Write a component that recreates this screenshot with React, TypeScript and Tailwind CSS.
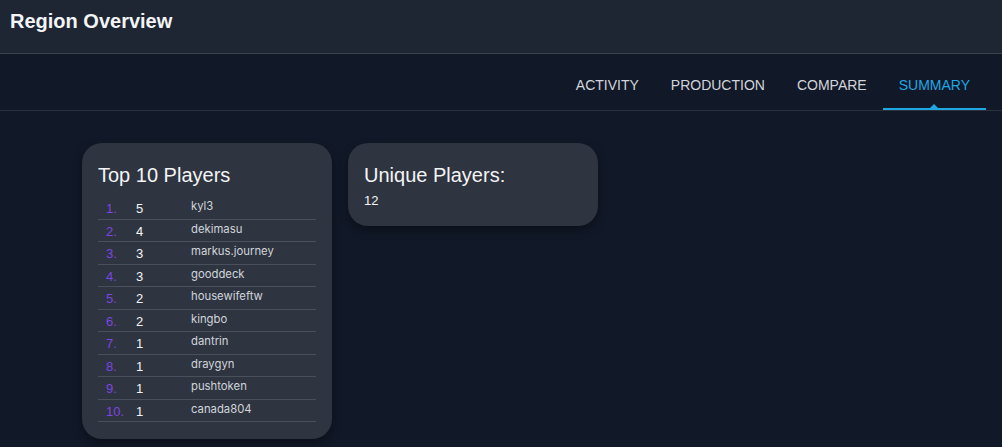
const players = [
  { rank: 1, count: 5, name: "kyl3" },
  { rank: 2, count: 4, name: "dekimasu" },
  { rank: 3, count: 3, name: "markus.journey" },
  { rank: 4, count: 3, name: "gooddeck" },
  { rank: 5, count: 2, name: "housewifeftw" },
  { rank: 6, count: 2, name: "kingbo" },
  { rank: 7, count: 1, name: "dantrin" },
  { rank: 8, count: 1, name: "draygyn" },
  { rank: 9, count: 1, name: "pushtoken" },
  { rank: 10, count: 1, name: "canada804" },
];

const tabs = ["ACTIVITY", "PRODUCTION", "COMPARE", "SUMMARY"];

export default function App() {
  return (
    <main className="min-h-screen bg-[#111827] font-['Liberation_Sans',Arial,sans-serif]">
      {/* ── Header ── */}
      <header className="h-[54px] bg-[#1e2533] border-b border-[#3a404c] px-[10px] pt-[9px]">
        <h1 className="text-[20px] font-bold text-[#f3f4f6] leading-6">Region Overview</h1>
      </header>

      {/* ── Tabs ── */}
      <nav className="h-[57px] border-b border-[#2c323d] flex justify-end pr-[16px]">
        {tabs.map((t) => {
          const active = t === "SUMMARY";
          return (
            <div
              key={t}
              className={`relative flex items-center px-[16px] pt-[6px] text-[14px] ${
                active ? "text-[#1fa7e4]" : "text-[#d1d5db]"
              }`}
            >
              {t}
              {active && (
                <>
                  <span className="absolute left-0 right-0 bottom-0 h-[2px] bg-[#1fa7e4]" />
                  <span className="absolute left-1/2 -translate-x-1/2 bottom-[2px] w-0 h-0 border-l-[4px] border-r-[4px] border-b-[4px] border-l-transparent border-r-transparent border-b-[#1fa7e4]" />
                </>
              )}
            </div>
          );
        })}
      </nav>

      {/* ── Cards ── */}
      <div className="flex items-start gap-[16px] pl-[82px] pt-[32px]">
        <div className="w-[250px] bg-[#2e3440] rounded-[20px] shadow-[0_4px_10px_rgba(0,0,0,0.35)] px-[16px] pt-[18px] pb-[17px]">
          <h2 className="text-[20px] text-[#f3f4f6] leading-[28px] mb-[8px]">Top 10 Players</h2>
          <div className="flex flex-col">
            {players.map((p) => (
              <div key={p.rank} className="flex items-center h-[22.5px] border-b border-[#4a505b]">
                <span className="w-[38px] pl-[8px] text-[13px] text-[#7c46e0] pt-[2px]">{p.rank}.</span>
                <span className="w-[55px] text-[13px] text-[#f3f4f6] pt-[2px]">{p.count}</span>
                <span className="text-[11.3px] text-[#d1d5db] font-['Inter',sans-serif] -mt-[2px]">{p.name}</span>
              </div>
            ))}
          </div>
        </div>

        <div className="w-[250px] h-[83px] bg-[#2e3440] rounded-[20px] shadow-[0_4px_10px_rgba(0,0,0,0.35)] px-[16px] pt-[18px]">
          <h2 className="text-[20px] text-[#f3f4f6] leading-[28px] mb-[2px]">Unique Players:</h2>
          <p className="text-[13px] text-[#f3f4f6]">12</p>
        </div>
      </div>
    </main>
  );
}
